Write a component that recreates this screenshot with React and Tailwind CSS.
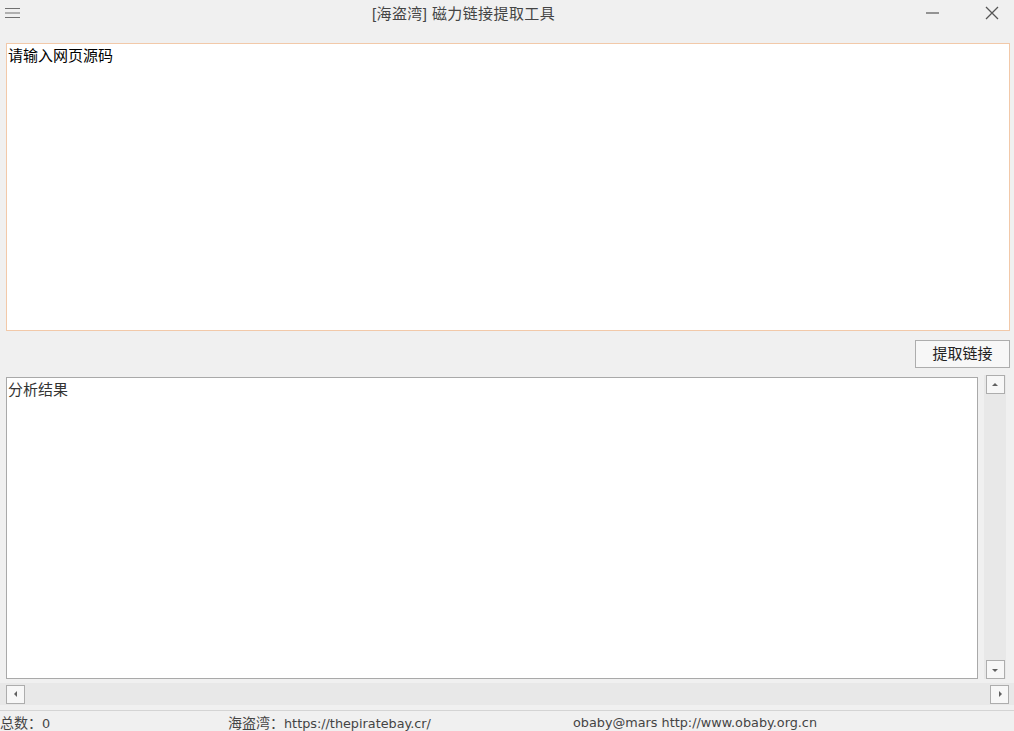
import React from 'react';

const font = { fontFamily: '"Liberation Sans", "Noto Sans CJK SC", sans-serif' };
const statusFont = { fontFamily: '"DejaVu Sans", "Noto Sans CJK SC", sans-serif' };

const ArrowBtn = ({ dir }) => {
  const paths = {
    up: 'M2 6 L5 3 L8 6 Z',
    down: 'M2 4 L5 7 L8 4 Z',
    left: 'M6 2 L3 5 L6 8 Z',
    right: 'M4 2 L7 5 L4 8 Z',
  };
  return (
    <div className="w-[19px] h-[19px] border border-[#adadad] bg-[#f7f7f7] flex items-center justify-center shrink-0">
      <svg width="10" height="10" viewBox="0 0 10 10">
        <path d={paths[dir]} fill="#606060" />
      </svg>
    </div>
  );
};

export default function App() {
  return (
    <div className="w-[1014px] h-[731px] bg-[#f0f0f0] flex flex-col overflow-hidden text-[15px]" style={font}>
      {/* Title bar */}
      <div className="h-[36px] flex items-center shrink-0 relative">
        <svg className="ml-[5px] mt-[-10px]" width="16" height="12" viewBox="0 0 16 12">
          <path d="M0 1.5 H15 M0 6 H15 M0 10.5 H15" stroke="#707070" strokeWidth="1" />
        </svg>
        <div className="absolute left-[372px] top-[3px] text-[15px] tracking-[0.4px] text-[#444] pointer-events-none">
          [海盗湾] 磁力链接提取工具
        </div>
        <div className="ml-auto flex items-center mt-[-10px]">
          <svg className="mr-[45px]" width="14" height="2" viewBox="0 0 14 2">
            <path d="M0 1 H13" stroke="#555" strokeWidth="1.2" />
          </svg>
          <svg className="mr-[15px]" width="14" height="14" viewBox="0 0 14 14">
            <path d="M1 1 L13 13 M13 1 L1 13" stroke="#555" strokeWidth="1.3" />
          </svg>
        </div>
      </div>

      {/* Source input */}
      <div className="px-[6px] pt-[7px] pr-[4px]">
        <div className="h-[288px] bg-white border border-[#f2c9a9] px-[1px] pt-[1px] text-black">
          请输入网页源码
        </div>
      </div>

      {/* Extract button */}
      <div className="flex justify-end pr-[4px] pt-[9px]">
        <button className="w-[95px] h-[28px] border border-[#adadad] bg-[#f7f7f7] text-[15px] text-[#222]">
          提取链接
        </button>
      </div>

      {/* Result area */}
      <div className="flex pl-[6px] pt-[9px] pr-[8px]">
        <div className="flex-1 h-[302px] bg-white border border-[#a9a9a9] px-[1px] pt-[1px] text-[#333]">
          分析结果
        </div>
        <div className="w-[22px] ml-[6px] bg-[#e8e8e8] flex flex-col justify-between items-center mt-[-2px] h-[304px]">
          <ArrowBtn dir="up" />
          <ArrowBtn dir="down" />
        </div>
      </div>

      {/* Horizontal scrollbar */}
      <div className="mt-[4px] h-[22px] bg-[#e8e8e8] flex items-center justify-between pl-[6px] pr-[5px]">
        <ArrowBtn dir="left" />
        <ArrowBtn dir="right" />
      </div>

      {/* Status bar */}
      <div className="mt-[5px] border-t border-[#d4d4d4] flex-1 text-[12.8px] text-[#444] relative" style={statusFont}>
        <span className="absolute left-0 top-[2px]"><span className="text-[14px]">总数：</span>0</span>
        <span className="absolute left-[228px] top-[2px]"><span className="text-[14px]">海盗湾：</span>https://thepiratebay.cr/</span>
        <span className="absolute left-[573px] top-[2px]">obaby@mars http://www.obaby.org.cn</span>
      </div>
    </div>
  );
}
